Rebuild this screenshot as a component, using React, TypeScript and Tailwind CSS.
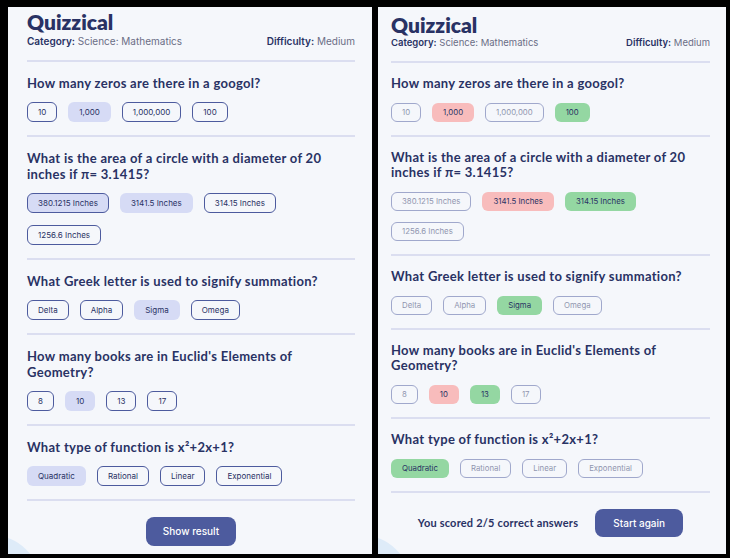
import React from "react";

type Question = {
  text: string;
  answers: string[];
  picked: number;
  correct: number;
  hover?: number;
};

const questions: Question[] = [
  { text: "How many zeros are there in a googol?", answers: ["10", "1,000", "1,000,000", "100"], picked: 1, correct: 3 },
  {
    text: "What is the area of a circle with a diameter of 20 inches if π= 3.1415?",
    answers: ["380.1215 Inches", "3141.5 Inches", "314.15 Inches", "1256.6 Inches"],
    picked: 1,
    correct: 2,
    hover: 0,
  },
  { text: "What Greek letter is used to signify summation?", answers: ["Delta", "Alpha", "Sigma", "Omega"], picked: 2, correct: 2 },
  { text: "How many books are in Euclid's Elements of Geometry?", answers: ["8", "10", "13", "17"], picked: 1, correct: 2 },
  { text: "What type of function is x²+2x+1?", answers: ["Quadratic", "Rational", "Linear", "Exponential"], picked: 0, correct: 0 },
];

const qFont = { fontFamily: "Lato, 'Open Sans', sans-serif" };
const uiFont = { fontFamily: "Inter, 'Liberation Sans', sans-serif" };

function Pill({ label, q, i, checked }: { label: string; q: Question; i: number; checked: boolean }) {
  let cls = "border-[#4d5b9e] bg-transparent";
  if (!checked) {
    if (q.hover === i) cls = "border-[#4d5b9e] bg-[#d6dbf5]";
    else if (q.picked === i) cls = "border-transparent bg-[#d6dbf5]";
  } else {
    if (q.correct === i) cls = "border-transparent bg-[#94d7a2]";
    else if (q.picked === i) cls = "border-transparent bg-[#f8bcbc]";
    else cls = "border-[#4d5b9e] bg-transparent opacity-50";
  }
  return (
    <button
      style={uiFont}
      className={`${checked ? "h-[19px] text-[7.8px]" : "h-[20px] text-[8px]"} px-[10px] rounded-[6px] border text-[#293264] font-normal leading-none ${cls}`}
    >
      {label}
    </button>
  );
}

function Panel({ checked }: { checked: boolean }) {
  const divider = "h-[2px] bg-[#dbdef0]";
  return (
    <div
      className={`relative overflow-hidden bg-[#f5f7fb] h-[547px] ${
        checked ? "w-[348px] pl-[13px] pr-[16px] pt-[6px]" : "w-[364px] pl-[19px] pr-[17px] pt-[3px]"
      }`}
    >
      <div className="absolute w-[100px] h-[100px] rounded-full bg-[#deebf8] left-[-67px] bottom-[-81px]" />
      <div className="relative">
        <h1 style={qFont} className="text-[21px] leading-[24px] font-extrabold text-[#293264]">
          Quizzical
        </h1>
        <div
          style={uiFont}
          className={`flex justify-between ${checked ? "text-[9.5px] mt-0" : "text-[10px] mt-[1px]"} leading-[12px] text-[#6b6e86]`}
        >
          <span>
            <b className="font-semibold text-[#293264]">Category:</b> Science: Mathematics
          </span>
          <span>
            <b className="font-semibold text-[#293264]">Difficulty:</b> Medium
          </span>
        </div>
        <div className={`${divider} ${checked ? "mt-[12px]" : "mt-[13px]"}`} />

        {questions.map((q, qi) => (
          <div key={qi}>
            <p
              style={qFont}
              className={`mt-[13px] text-[13px] font-bold text-[#293264] tracking-[0.3px] ${
                checked ? "leading-[15px] pr-[20px]" : "leading-[16px] pr-[12px]"
              }`}
            >
              {q.text}
            </p>
            <div className={`flex flex-wrap gap-x-[11px] ${checked ? "mt-[12px] gap-y-[11px]" : "mt-[11px] gap-y-[12px]"}`}>
              {q.answers.map((a, i) => (
                <Pill key={a} label={a} q={q} i={i} checked={checked} />
              ))}
            </div>
            <div className={`${divider} mt-[13px]`} />
          </div>
        ))}

        {checked ? (
          <div className="flex items-center justify-center gap-[17px] mt-[16px]">
            <span style={qFont} className="text-[11px] font-bold text-[#293264] tracking-[0.2px]">
              You scored 2/5 correct answers
            </span>
            <button style={uiFont} className="w-[88px] h-[28px] rounded-[8px] bg-[#4d5b9e] text-white text-[10px] font-medium">
              Start again
            </button>
          </div>
        ) : (
          <div className="flex justify-center mt-[16px]">
            <button style={uiFont} className="w-[90px] h-[29px] rounded-[8px] bg-[#4d5b9e] text-white text-[10px] font-medium">
              Show result
            </button>
          </div>
        )}
      </div>
    </div>
  );
}

export default function App() {
  return (
    <div className="w-[730px] h-[558px] bg-black flex items-start gap-[6px] pt-[7px] pl-[8px] overflow-hidden">
      <Panel checked={false} />
      <Panel checked={true} />
    </div>
  );
}
